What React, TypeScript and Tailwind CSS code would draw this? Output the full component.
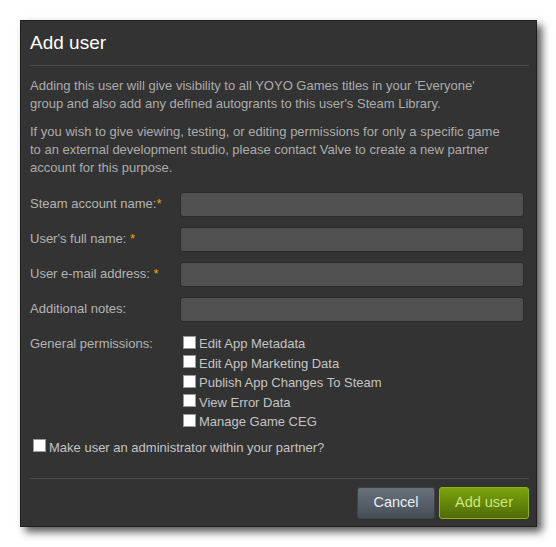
import React from "react";

function Field({ label, req, space }: { label: string; req?: boolean; space?: boolean }) {
  return (
    <div className="flex h-[25px] items-center">
      <div className="w-[150px] pb-[2px] text-[13px] leading-[18px] text-[#b3b3b3]">
        {label}
        {req ? <span className="text-[#f0a30a]">{space ? " *" : "*"}</span> : null}
      </div>
      <div className="h-[25px] w-[344px] rounded-[3px] border border-[#2a2a2a] bg-[#505050]" />
    </div>
  );
}

function Check({ label }: { label: string }) {
  return (
    <div className="flex h-[19.5px] items-start text-[13px] leading-[19.5px] text-[#c4c4c4]">
      <span className="mt-[1.5px] h-[13px] w-[13px] shrink-0 border border-[#9a9a9a] bg-white" />
      <span className="ml-[3px] whitespace-nowrap">{label}</span>
    </div>
  );
}

export default function App() {
  return (
    <div className="min-h-[547px] w-[556px] bg-white pl-[20px] pt-[20px] font-['Liberation_Sans',Arial,sans-serif]">
      <div className="w-[517px] border border-[#1f1f1f] bg-[#333333] pb-[7px] pl-[9px] pr-[7px] pt-[10px] shadow-[5px_5px_8px_rgba(0,0,0,0.65)]">
        <h1 className="text-[19px] leading-[24px] text-white">Add user</h1>
        <div className="mt-[10px] h-px bg-[#4d4d4d]" />
        <p className="mt-[11px] w-[476px] text-[13px] leading-[18px] text-[#acacac]">
          Adding this user will give visibility to all YOYO Games titles in your 'Everyone' group and also add any
          defined autogrants to this user's Steam Library.
        </p>
        <p className="mt-[10px] w-[476px] text-[13px] leading-[18px] text-[#acacac]">
          If you wish to give viewing, testing, or editing permissions for only a specific game to an external
          development studio, please contact Valve to create a new partner account for this purpose.
        </p>
        <div className="mt-[15px] flex flex-col gap-[10px]">
          <Field label="Steam account name:" req />
          <Field label="User's full name:" req space />
          <Field label="User e-mail address:" req space />
          <Field label="Additional notes:" />
        </div>
        <div className="mt-[12px] flex items-start">
          <div className="w-[150px] text-[13px] leading-[19.5px] text-[#b3b3b3]">General permissions:</div>
          <div className="flex flex-col pl-[3px]">
            <Check label="Edit App Metadata" />
            <Check label="Edit App Marketing Data" />
            <Check label="Publish App Changes To Steam" />
            <Check label="View Error Data" />
            <Check label="Manage Game CEG" />
          </div>
        </div>
        <div className="mt-[6px] pl-[3px]">
          <Check label="Make user an administrator within your partner?" />
        </div>
        <div className="mt-[21px] h-px bg-[#4d4d4d]" />
        <div className="mt-[8px] flex justify-end gap-[4px]">
          <button className="flex h-[32px] w-[78px] items-center justify-center rounded-[3px] border border-[#3d434b] bg-gradient-to-b from-[#69717b] to-[#474e57] text-[14.5px] text-[#e8eef4]">
            Cancel
          </button>
          <button className="flex h-[32px] w-[90px] items-center justify-center rounded-[3px] border border-[#8ab514] bg-gradient-to-b from-[#7ca30b] to-[#506c09] text-[14.5px] text-[#cfe67a]">
            Add user
          </button>
        </div>
      </div>
    </div>
  );
}
